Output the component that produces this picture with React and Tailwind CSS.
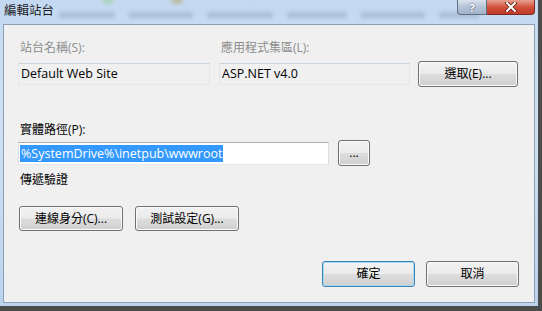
import React from "react";

function WinButton({ children, className = "", focused = false }) {
  return (
    <button
      className={`flex items-center justify-center rounded-[3px] border text-[12px] leading-none text-black ${
        focused
          ? "border-[#3c7fb1] shadow-[inset_0_0_0_1px_#a6dcf6]"
          : "border-[#707070] shadow-[inset_0_0_0_1px_#fbfbfb]"
      } bg-[linear-gradient(#f2f2f2_0%,#ebebeb_48%,#dddddd_52%,#cfcfcf_100%)] ${className}`}
    >
      {children}
    </button>
  );
}

function ReadBox({ children, className = "" }) {
  return (
    <div
      className={`flex h-[22px] items-center border border-t-[#c9d3de] border-x-[#dfe6ee] border-b-[#e3e9ef] bg-[#f0f0f0] px-[2px] text-[12.5px] text-black ${className}`}
    >
      {children}
    </div>
  );
}

export default function App() {
  return (
    <div className="relative h-[311px] w-[542px] overflow-hidden bg-[#4c4c4c] font-['Open_Sans','Noto_Sans_CJK_TC',sans-serif]">
      <div className="flex h-[306px] w-[538px] flex-col bg-[linear-gradient(#c4d9f1,#cfe0f4_40%,#bcd3ee)] px-[3px] pb-[3px]">
        {/* title bar */}
        <div className="relative flex h-[24px] items-start">
          <div className="pointer-events-none absolute left-[56px] top-[12px] flex gap-[14px] opacity-40 blur-[2px]">
            <span className="h-[6px] w-[56px] bg-[#7f93ab]" />
            <span className="h-[6px] w-[64px] bg-[#7f93ab]" />
            <span className="h-[6px] w-[66px] bg-[#7f93ab]" />
            <span className="h-[6px] w-[60px] bg-[#7f93ab]" />
            <span className="h-[6px] w-[64px] bg-[#7f93ab]" />
            <span className="h-[6px] w-[40px] bg-[#7f93ab]" />
          </div>
          <div className="pointer-events-none absolute left-[100px] top-[-4px] h-[8px] w-[10px] rounded-full bg-[#8fce8f] opacity-60 blur-[2px]" />
          <div className="pointer-events-none absolute left-[168px] top-[-4px] h-[8px] w-[12px] rounded-full bg-[#b6a66c] opacity-60 blur-[2px]" />
          <span className="relative ml-[1px] mt-[3px] text-[12.5px] leading-[16px] text-[#1b1b1b]">編輯站台</span>
          <div className="relative ml-auto flex h-[15px]">
            <div className="flex w-[30px] items-center justify-center rounded-bl-[4px] border border-t-0 border-[#5f6f85] bg-[linear-gradient(#dbe3ee,#b5c3d6_50%,#a3b3c8)] text-[11px] font-bold leading-none text-white [text-shadow:0_0_2px_#33435a]">
              ?
            </div>
            <div className="flex w-[48px] items-center justify-center rounded-br-[4px] border border-l-0 border-t-0 border-[#7a2a20] bg-[linear-gradient(#e8a293,#d3523b_50%,#c0392b)]">
              <svg width="12" height="10" viewBox="0 0 12 10">
                <path d="M2 1 L10 9 M10 1 L2 9" stroke="#5a1a12" strokeWidth="3.6" strokeLinecap="round" />
                <path d="M2 1 L10 9 M10 1 L2 9" stroke="#ffffff" strokeWidth="2" strokeLinecap="round" />
              </svg>
            </div>
          </div>
        </div>

        {/* client area */}
        <div className="flex flex-1 flex-col border border-[#8e9fb3] bg-[#f0f0f0] pl-[14px] pr-[15px] pt-[16px]">
          <div className="flex text-[12px] leading-[14px] text-[#8d8d8d]">
            <span className="ml-[2px] w-[199px]">站台名稱(S):</span>
            <span className="ml-[2px]">應用程式集區(L):</span>
          </div>
          <div className="mt-[6px] flex h-[26px] items-center">
            <ReadBox className="w-[192px]">Default Web Site</ReadBox>
            <ReadBox className="ml-[9px] w-[191px]">ASP.NET v4.0</ReadBox>
            <WinButton className="ml-[8px] h-[26px] w-[100px]">選取(E)...</WinButton>
          </div>

          <span className="ml-[2px] mt-[36px] text-[12px] leading-[14px] text-black">實體路徑(P):</span>
          <div className="mt-[3px] flex h-[26px] items-center">
            <div className="flex h-[23px] w-[311px] items-center border border-t-[#abadb3] border-x-[#dbdfe6] border-b-[#e3e9ef] bg-white px-[1px]">
              <span className="bg-[#3399ff] px-[1px] text-[12.5px] leading-[17px] text-white">
                %SystemDrive%\inetpub\wwwroot
              </span>
            </div>
            <WinButton className="ml-[9px] h-[26px] w-[32px]">...</WinButton>
          </div>

          <span className="ml-[2px] mt-[7px] text-[12px] leading-[14px] text-black">傳遞驗證</span>

          <div className="ml-[1px] mt-[19px] flex gap-[12px]">
            <WinButton className="h-[25px] w-[104px]">連線身分(C)...</WinButton>
            <WinButton className="h-[25px] w-[104px]">測試設定(G)...</WinButton>
          </div>

          <div className="mt-[30px] flex justify-end gap-[11px]">
            <WinButton focused className="h-[26px] w-[93px]">確定</WinButton>
            <WinButton className="h-[26px] w-[93px]">取消</WinButton>
          </div>
        </div>
      </div>
    </div>
  );
}
